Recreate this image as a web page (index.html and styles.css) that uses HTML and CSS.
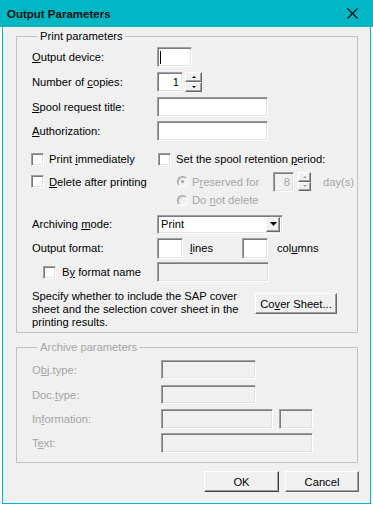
FILE: index.html
```html
<!DOCTYPE html>
<html>
<head>
<meta charset="utf-8">
<title>Output Parameters</title>
<link rel="stylesheet" href="styles.css">
</head>
<body>
<div class="window">
  <div class="titlebar">
    <span class="title">Output Parameters</span>
    <svg class="close" width="11" height="11" viewBox="0 0 11 11"><path d="M0.5 0.5L10.5 10.5M10.5 0.5L0.5 10.5" stroke="#000" stroke-width="1.1" fill="none"/></svg>
  </div>
  <div class="client">
    <fieldset class="group print">
      <legend>Print parameters</legend>
      <div class="row h24"><span class="lbl"><u>O</u>utput device:</span><span class="field w35"><span class="caret"></span></span></div>
      <div class="row h26"><span class="lbl">Number of <u>c</u>opies:</span><span class="field w26 num">1</span><span class="spin"><span class="sbtn"><i class="up"></i></span><span class="sbtn"><i class="down"></i></span></span></div>
      <div class="row h24"><span class="lbl"><u>S</u>pool request title:</span><span class="field w111"></span></div>
      <div class="row h24"><span class="lbl"><u>A</u>uthorization:</span><span class="field w111"></span></div>

      <div class="checks">
        <div class="cell c1"><span class="cb"></span><span>Print <u>i</u>mmediately</span></div>
        <div class="cell"><span class="cb"></span><span>Set the spool retention <u>p</u>eriod:</span></div>
        <div class="cell c1"><span class="cb"></span><span><u>D</u>elete after printing</span></div>
        <div class="cell radio-row dis"><span class="rb on"></span><span class="ptext">P<u>r</u>eserved for</span><span class="field w21 num dis-f">8</span><span class="spin small"><span class="sbtn"><i class="up g"></i></span><span class="sbtn"><i class="down g"></i></span></span><span class="days">day(s)</span></div>
        <div class="cell"></div>
        <div class="cell radio-row dis"><span class="rb"></span><span>Do <u>n</u>ot delete</span></div>
      </div>

      <div class="row h20 mt6"><span class="lbl">Archiving <u>m</u>ode:</span><span class="field combo"><span>Print</span><span class="drop"><svg width="7" height="4" viewBox="0 0 7 4"><path d="M0 0H7L3.5 4Z" fill="#000"/></svg></span></span></div>
      <div class="row h22 mt3"><span class="lbl">Output format:</span><span class="field w26 h21"></span><span class="lines"><u>l</u>ines</span><span class="field w26 h21"></span><span class="cols">col<u>u</u>mns</span></div>
      <div class="row h20 mt3"><span class="lbl sub"><span class="cb"></span><span>B<u>y</u> format name</span></span><span class="field w112 dis-f"></span></div>
      <div class="cover">
        <p class="note">Specify whether to include the SAP cover<br>sheet and the selection cover sheet in the<br>printing results.</p>
        <span class="btn cover-btn">Co<u>v</u>er Sheet...</span>
      </div>
    </fieldset>

    <fieldset class="group archive">
      <legend>Archive parameters</legend>
      <div class="row h25"><span class="lbl2">O<u>b</u>j.type:</span><span class="field dis-f w95"></span></div>
      <div class="row h25"><span class="lbl2">Doc.<u>t</u>ype:</span><span class="field dis-f w95"></span></div>
      <div class="row h24"><span class="lbl2">In<u>f</u>ormation:</span><span class="field dis-f w112"></span><span class="field dis-f w34 ml6"></span></div>
      <div class="row h24"><span class="lbl2">T<u>e</u>xt:</span><span class="field dis-f w152"></span></div>
    </fieldset>

    <div class="buttons">
      <span class="btn ok">OK</span>
      <span class="btn cancel">Cancel</span>
    </div>
  </div>
</div>
</body>
</html>
```

FILE: styles.css
```css
body {
  margin: 0;
  background: #fff;
  font-family: "Liberation Sans", Arial, sans-serif;
  font-size: 11.2px;
  color: #000;
}
u { text-decoration: underline; text-underline-offset: 1px; }

.window { width: 373px; }

.titlebar {
  height: 27px;
  background: #00b7c3;
  display: flex;
  align-items: center;
  justify-content: space-between;
  padding: 0 15px 0 7px;
  box-sizing: border-box;
}
.title { font-weight: bold; font-size: 11.5px; color: #111; }
.close { display: block; }

.client {
  margin-left: 2px;
  width: 369px;
  box-sizing: border-box;
  border: 1px solid #00b7c3;
  border-top: 0;
  background: #f0f0f0;
  padding: 2px 0 11px 13px;
}

.group {
  margin: 0;
  padding: 2px 0 3px 15px;
  border: 1px solid #c2c2c2;
  width: 342px;
  box-sizing: border-box;
  min-width: 0;
}
.group legend {
  padding: 0 2px;
  margin-left: 6px;
  line-height: 14px;
}
.archive { margin-top: 7px; padding-bottom: 7px; padding-top: 3px; color: #a6a6a6; }
.archive legend { color: #a6a6a6; }

.row { display: flex; align-items: center; white-space: nowrap; }
.h20 { height: 20px; }
.h22 { height: 22px; }
.h24 { height: 24px; }
.h25 { height: 25px; }
.h26 { height: 26px; }
.mt3 { margin-top: 3px; }
.mt6 { margin-top: 6px; }
.ml6 { margin-left: 6px; }

.lbl { width: 125px; flex: none; }
.lbl2 { width: 129px; flex: none; }
.lbl.sub { display: flex; align-items: center; gap: 6px; padding-left: 11px; box-sizing: border-box; }

.field {
  display: inline-flex;
  align-items: center;
  box-sizing: border-box;
  height: 20px;
  background: #fff;
  border: 1px solid;
  border-color: #a0a0a0 #fff #fff #a0a0a0;
  box-shadow: inset 1px 1px 0 #7a7a7a, inset -1px -1px 0 #e3e3e3;
  flex: none;
}
.field.dis-f { background: #f0f0f0; }
.h21 { height: 21px; }
.w21 { width: 21px; }
.w26 { width: 26px; }
.w34 { width: 34px; }
.w35 { width: 35px; }
.w95 { width: 95px; height: 19px; }
.w111 { width: 111px; }
.w112 { width: 112px; }
.w152 { width: 152px; }
.num { justify-content: flex-end; padding-right: 3px; }
.caret { width: 1px; height: 13px; background: #000; margin-left: 2px; }

.spin {
  display: flex;
  flex-direction: column;
  width: 17px;
  height: 20px;
  margin-left: 2px;
  flex: none;
}
.spin.small { width: 13px; height: 19px; margin-left: 0; }
.sbtn {
  flex: 1;
  display: flex;
  align-items: center;
  justify-content: center;
  background: #f0f0f0;
  border: 1px solid;
  border-color: #fff #696969 #696969 #fff;
  box-shadow: inset -1px -1px 0 #a0a0a0;
}
.sbtn i { display: block; width: 0; height: 0; border-left: 2px solid transparent; border-right: 2px solid transparent; }
.sbtn i.up { border-bottom: 2px solid #000; }
.sbtn i.down { border-top: 2px solid #000; }
.sbtn i.up.g { border-bottom-color: #a0a0a0; }
.sbtn i.down.g { border-top-color: #a0a0a0; }

.checks {
  margin-top: 4px;
  display: grid;
  grid-template-columns: 126px auto;
  grid-template-rows: 24px 21px 16px;
  white-space: nowrap;
}
.cell { display: flex; align-items: center; gap: 5px; }
.cell.c1 { margin-left: -1px; }
.cb {
  width: 13px;
  height: 13px;
  box-sizing: border-box;
  background: #fff;
  border: 1px solid;
  border-color: #a0a0a0 #fff #fff #a0a0a0;
  box-shadow: inset 1px 1px 0 #7a7a7a, inset -1px -1px 0 #e3e3e3;
  flex: none;
}
.radio-row { padding-left: 19px; gap: 4px; }
.dis { color: #a6a6a6; }
.rb {
  width: 11px;
  height: 11px;
  box-sizing: border-box;
  border-radius: 50%;
  border: 1px solid;
  border-color: #a0a0a0 #fff #fff #a0a0a0;
  box-shadow: inset 1px 1px 0 #c4c4c4;
  background: #f0f0f0;
  display: flex;
  align-items: center;
  justify-content: center;
  flex: none;
}
.rb.on::after { content: ""; width: 3px; height: 3px; border-radius: 50%; background: #a0a0a0; }
.ptext { width: 77px; flex: none; }
.radio-row .field { margin-left: 0; }
.radio-row .spin { margin-left: 0; }
.days { margin-left: 7px; }
.radio-row .days { margin-left: 8px; }

.combo {
  width: 126px;
  height: 19px;
  justify-content: space-between;
  padding: 0 2px 0 3px;
}
.drop {
  width: 14px;
  height: 15px;
  box-sizing: border-box;
  display: flex;
  align-items: center;
  justify-content: center;
  background: #f0f0f0;
  border: 1px solid;
  border-color: #fff #696969 #696969 #fff;
  box-shadow: inset -1px -1px 0 #a0a0a0;
}
.drop svg { display: block; }

.lines { margin-left: 7px; width: 52px; flex: none; }
.cols { margin-left: 9px; }

.cover { display: flex; align-items: flex-start; margin-top: 8px; }
.note { margin: 0; width: 223px; line-height: 13px; white-space: nowrap; flex: none; }

.btn {
  display: inline-flex;
  align-items: center;
  justify-content: center;
  box-sizing: border-box;
  height: 21px;
  background: #f0f0f0;
  border: 1px solid;
  border-color: #fff #696969 #696969 #fff;
  box-shadow: inset -1px -1px 0 #a0a0a0;
  white-space: nowrap;
}
.cover-btn { width: 82px; margin-top: 3px; }

.buttons {
  display: flex;
  justify-content: flex-end;
  gap: 6px;
  width: 343px;
  margin-top: 8px;
}
.ok { width: 75px; border-color: #fff #404040 #404040 #fff; }
.cancel { width: 74px; }
```
